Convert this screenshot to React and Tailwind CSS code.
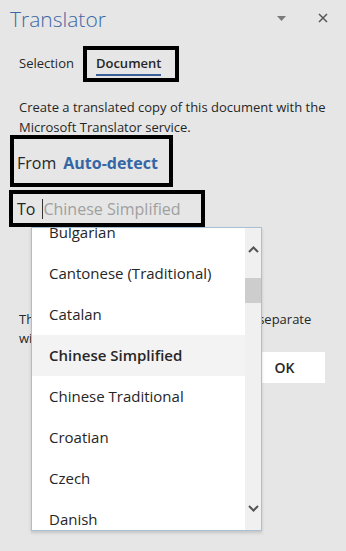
import React from "react";

const items = [
  "Bulgarian",
  "Cantonese (Traditional)",
  "Catalan",
  "Chinese Simplified",
  "Chinese Traditional",
  "Croatian",
  "Czech",
  "Danish",
];

export default function App() {
  return (
    <div
      className="relative w-[346px] h-[551px] overflow-hidden bg-[#e6e6e6] text-[#262626]"
      style={{ fontFamily: '"Open Sans", "Noto Sans", sans-serif' }}
    >
      {/* Header */}
      <div className="flex items-start justify-between pl-[10px] pr-[18px] h-[42px]">
        <div className="mt-[9px] text-[21px] font-light leading-none text-[#3d67a3]">Translator</div>
        <div className="mt-[13px] h-[10px] flex items-center gap-[32px]">
          <svg width="9" height="5" viewBox="0 0 9 5">
            <path d="M0 0 L9 0 L4.5 5 Z" fill="#7a7a7a" />
          </svg>
          <svg width="10" height="10" viewBox="0 0 10 10">
            <path d="M1 1 L9 9 M9 1 L1 9" stroke="#555" strokeWidth="1.5" />
          </svg>
        </div>
      </div>

      {/* Tabs */}
      <div className="flex items-center mt-[4px] pl-[19px] h-[36px]">
        <div className="text-[13px]">Selection</div>
        <div className="ml-[9px] border-[4px] border-black h-[36px] w-[96px] flex items-center pl-[9px]">
          <div className="relative text-[13px] font-semibold">
            Document
            <div className="absolute left-0 right-0 -bottom-[2px] h-[2px] bg-[#3b5f97]" />
          </div>
        </div>
      </div>

      {/* Description */}
      <div className="mt-[15px] pl-[19px] pr-[10px] text-[13px] leading-[20px]">
        Create a translated copy of this document with the Microsoft Translator service.
      </div>

      {/* From */}
      <div className="ml-[10px] -mt-[2px] w-[163px] h-[52px] border-[4px] border-black flex items-center pl-[3px] pt-[4px] text-[16px]">
        <span>From</span>
        <span className="ml-[7px] font-bold text-[#3465a4]">Auto-detect</span>
      </div>

      {/* To */}
      <div className="ml-[9px] mt-[3px] w-[196px] h-[37px] border-[4px] border-black flex items-center pl-[4px] text-[16px]">
        <span>To</span>
        <span className="ml-[7px] w-[1px] h-[20px] bg-[#333]" />
        <span className="text-[#a0a0a0]">Chinese Simplified</span>
      </div>

      {/* Note text */}
      <div className="mt-[83px] pl-[19px] text-[13px] leading-[19px]">
        <div>The translated document will open in a separate</div>
        <div>window.</div>
      </div>

      {/* OK button */}
      <div className="flex justify-end pr-[21px] mt-[4px]">
        <div className="w-[81px] h-[31px] bg-white flex items-center justify-center text-[14px] font-semibold">
          OK
        </div>
      </div>

      {/* Dropdown overlay */}
      <div className="absolute left-[31px] top-[227px] w-[231px] h-[304px] bg-white border border-[#a9c0d4] shadow-[0_2px_3px_rgba(0,0,0,0.15)] flex overflow-hidden">
        <div className="flex-1 overflow-hidden">
          <div className="-mt-[16px]">
            {items.map((it) => (
              <div
                key={it}
                className={
                  "h-[41px] flex items-center pl-[17px] text-[15px] " +
                  (it === "Chinese Simplified" ? "bg-[#f3f3f3] font-semibold" : "")
                }
              >
                {it}
              </div>
            ))}
          </div>
        </div>
        <div className="w-[16px] bg-[#f0f0f0] flex flex-col items-center">
          <svg className="mt-[18px]" width="11" height="7" viewBox="0 0 11 7">
            <path d="M1 6 L5.5 1.5 L10 6" stroke="#555" strokeWidth="2" fill="none" />
          </svg>
          <div className="mt-[25px] w-full h-[25px] bg-[#cdcdcd]" />
          <div className="flex-1" />
          <svg className="mb-[18px]" width="11" height="7" viewBox="0 0 11 7">
            <path d="M1 1 L5.5 5.5 L10 1" stroke="#555" strokeWidth="2" fill="none" />
          </svg>
        </div>
      </div>
    </div>
  );
}
